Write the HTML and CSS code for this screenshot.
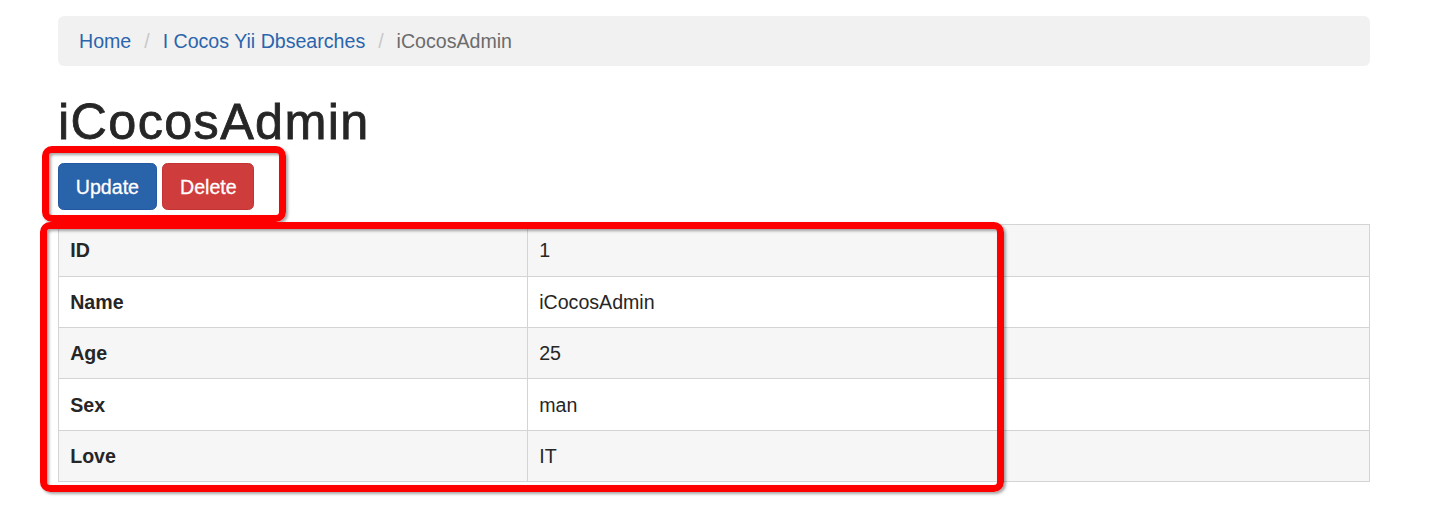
FILE: index.html
```html
<!DOCTYPE html>
<html lang="en">
<head>
<meta charset="utf-8">
<title>iCocosAdmin</title>
<link rel="stylesheet" href="styles.css">
</head>
<body>
<div class="page">
  <div class="container">
    <ul class="breadcrumb">
      <li><a href="#">Home</a></li>
      <li><a href="#">I Cocos Yii Dbsearches</a></li>
      <li class="active">iCocosAdmin</li>
    </ul>
    <h1 class="title">iCocosAdmin</h1>
    <p class="actions">
      <a class="btn btn-primary" href="#">Update</a>
      <a class="btn btn-danger" href="#">Delete</a>
    </p>
    <table class="detail">
      <colgroup><col class="col-label"><col></colgroup>
      <tbody>
        <tr><th>ID</th><td>1</td></tr>
        <tr><th>Name</th><td>iCocosAdmin</td></tr>
        <tr><th>Age</th><td>25</td></tr>
        <tr><th>Sex</th><td>man</td></tr>
        <tr><th>Love</th><td>IT</td></tr>
      </tbody>
    </table>
  </div>
  <div class="mark mark-actions"></div>
  <div class="mark mark-table"></div>
</div>
</body>
</html>
```
FILE: styles.css
```css
* { box-sizing: border-box; }
html, body { margin: 0; padding: 0; background: #fff; }
body {
  font-family: "Liberation Sans", Arial, Helvetica, sans-serif;
  font-size: 19.6px;
  line-height: 28px;
  color: #262626;
}
.page { position: relative; width: 1432px; min-height: 520px; }
.container {
  width: 1312px;
  margin-left: 58px;
  padding-top: 16px;
}
.breadcrumb {
  list-style: none;
  margin: 0 0 28px 0;
  padding: 11px 21px;
  height: 50px;
  background: #f1f1f1;
  border-radius: 6px;
}
.breadcrumb li { display: inline-block; }
.breadcrumb li + li:before {
  content: "/\00a0";
  padding: 0 7.5px;
  color: #c8c8c8;
}
.breadcrumb a { color: #2a65ad; text-decoration: none; }
.breadcrumb .active { color: #6b6b6b; }
.title {
  margin: 28px 0 14px 0;
  font-size: 50.4px;
  line-height: 55.4px;
  font-weight: 400;
  letter-spacing: 1.35px;
  color: #262626;
  -webkit-text-stroke: 0.8px #262626;
}
.actions { margin: 0 0 14px 0; }
.btn {
  display: inline-block;
  padding: 8.4px 16.8px;
  line-height: 28px;
  font-size: 19.6px;
  color: #fff;
  text-decoration: none;
  border: 1.4px solid transparent;
  border-radius: 5.6px;
  -webkit-text-stroke: 0.3px #fff;
}
.btn-primary { background: #2963aa; border-color: #2458a0; }
.btn-danger { background: #cf3c3c; border-color: #c23434; }
.detail {
  width: 1312px;
  border-collapse: collapse;
  border: 1.4px solid #d4d4d4;
  table-layout: fixed;
}
.col-label { width: 469px; }
.detail th, .detail td {
  padding: 11.2px 11.2px;
  line-height: 28px;
  text-align: left;
  vertical-align: top;
  border: 1.4px solid #d4d4d4;
}
.detail th { font-weight: 700; }
.detail tr:nth-child(odd) { background: #f6f6f6; }
.mark {
  position: absolute;
  border: 7px solid #ff0000;
  border-radius: 10px;
  box-shadow: 2px 2px 3px rgba(0,0,0,0.35), inset 2px 2px 3px rgba(0,0,0,0.35);
}
.mark-actions { left: 42px; top: 146px; width: 244px; height: 76px; }
.mark-table { left: 40px; top: 222px; width: 964px; height: 270px; }
```
